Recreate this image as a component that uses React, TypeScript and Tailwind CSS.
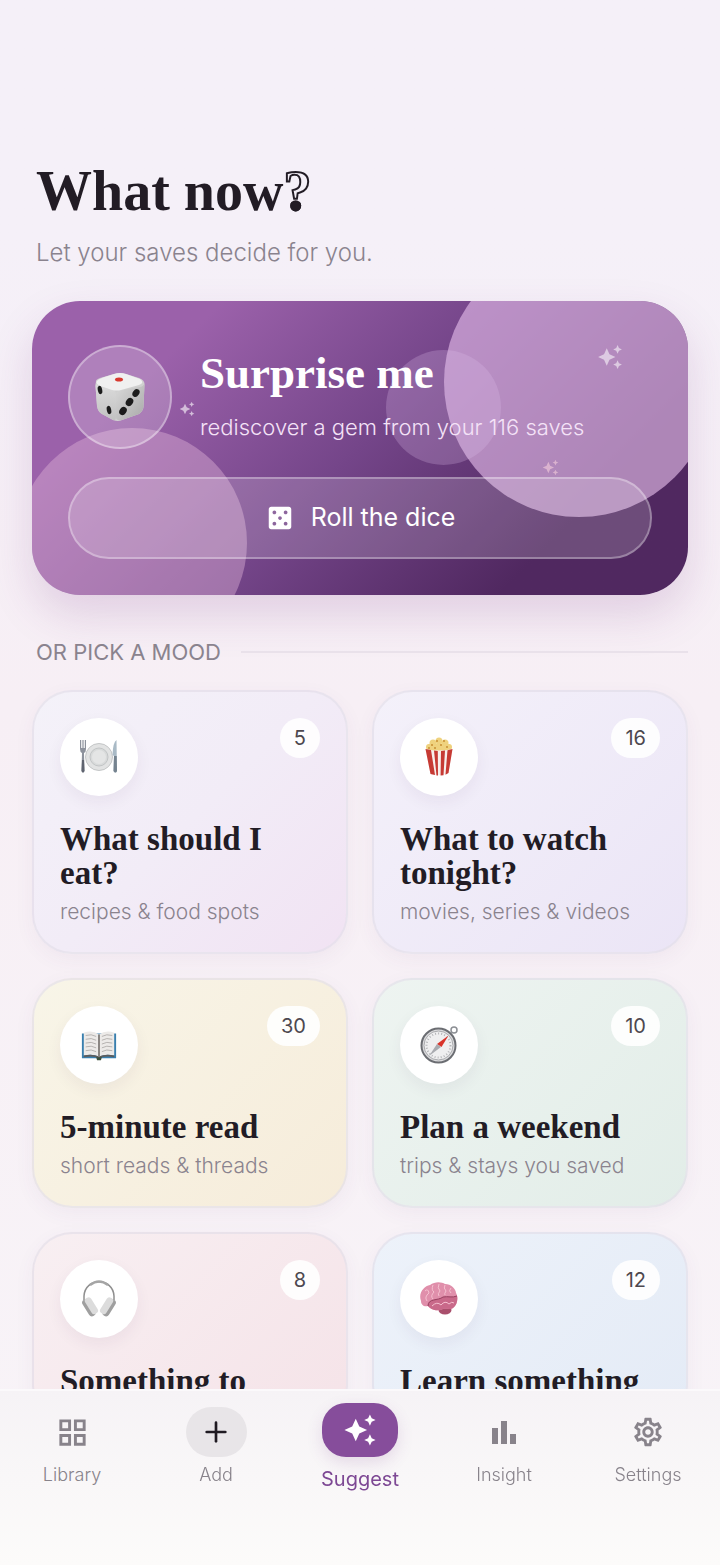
import React from "react"
import { MdAutoAwesome, MdCasino, MdOutlineGridView, MdOutlineSettings } from "react-icons/md"
import { Plus } from "lucide-react"

interface Mood {
    title: string
    note?: string
    count: number
    icon: React.ReactNode
    background: string
}

interface NavItem {
    label: string
    icon: React.ReactNode
    kind: "plain" | "add" | "active"
}

const serif = "font-['Liberation_Serif',serif]"

const DiceIcon = () => (
    <svg width="50" height="50" viewBox="0 0 50 50" aria-hidden="true">
        <defs>
            <linearGradient id="diceLeft" x1="0" y1="0" x2="0" y2="1">
                <stop offset="0" stopColor="#dcdcdc" />
                <stop offset="1" stopColor="#c2c2c2" />
            </linearGradient>
            <linearGradient id="diceRight" x1="0" y1="0" x2="1" y2="1">
                <stop offset="0" stopColor="#dadada" />
                <stop offset="1" stopColor="#a9a9a9" />
            </linearGradient>
        </defs>
        <path d="M1 10 Q0 8 5 6 L19 2 Q25 0 31 2 L44 6 Q50 8 49.500 13 L48.500 35 Q48 39 44 42 L27 48 Q23 50 18 48 L7 42 Q3 40 2 34 L0.500 14 Z" fill="#d0d0d0" />
        <path d="M1 10 Q1 14 6 15 L18 18 Q21 19 21 23 V45 Q21 49 18 48 L7 42 Q3 40 2 34 L0.500 14 Z" fill="url(#diceLeft)" />
        <path d="M49.500 11 Q49 14 45 15 L26 18 Q21 19 21 23 V45 Q21 49 27 48 L44 42 Q48 39 48.500 35 Z" fill="url(#diceRight)" />
        <path d="M3 8 Q5 6 19 2 Q25 0 31 2 L45 7 Q50 11 44 13 L26 18 Q22 19 17 18 L5 14 Q-1 11 3 8 Z" fill="#f0f0f0" />
        <ellipse cx="24" cy="7.500" rx="4" ry="2" fill="#d8392f" />
        <ellipse cx="5" cy="18" rx="2.200" ry="4.200" transform="rotate(-12 5 18)" fill="#1c1c1c" />
        <ellipse cx="14" cy="38" rx="2.200" ry="4.200" transform="rotate(-12 14 38)" fill="#1c1c1c" />
        <ellipse cx="41" cy="21" rx="3.200" ry="4.200" transform="rotate(35 41 21)" fill="#1c1c1c" />
        <ellipse cx="34.500" cy="30" rx="3.400" ry="4.400" transform="rotate(35 34.500 30)" fill="#1c1c1c" />
        <ellipse cx="28" cy="39" rx="3.400" ry="4.400" transform="rotate(35 28 39)" fill="#1c1c1c" />
    </svg>
)

const PlateIcon = () => (
    <svg width="40" height="40" viewBox="0 0 40 40" aria-hidden="true">
        <circle cx="20" cy="20" r="13.500" fill="#e2e3e3" stroke="#c4c6c7" />
        <circle cx="20" cy="20" r="9" fill="#d8dada" stroke="#c2c5c6" />
        <circle cx="20" cy="20" r="7" fill="#e4e5e5" />
        <path d="M1 3 V12 Q1 15 3 16 L2.500 34 Q4 37 5.500 34 L5 16 Q7 15 7 12 V3 H5.800 V11 H4.600 V3 H3.400 V11 H2.200 V3 Z" fill="#8d929c" />
        <path d="M3 23 L2.500 34 Q4 37 5.500 34 L5 23 Z" fill="#5f6470" />
        <path d="M37.500 3 Q34 5 33.500 18 L35 19 L34.500 34 Q36.500 37 38 34 Z" fill="#a9bac6" />
        <path d="M35 19 L34.500 34 Q36.500 37 38 34 L37.700 19 Z" fill="#75838f" />
    </svg>
)

const PopcornIcon = () => (
    <svg width="40" height="40" viewBox="0 0 40 40" aria-hidden="true">
        <g fill="#efd27e">
            <circle cx="10" cy="10" r="3" />
            <circle cx="14" cy="6" r="3.500" />
            <circle cx="20" cy="4" r="3.500" />
            <circle cx="26" cy="6" r="3.500" />
            <circle cx="30" cy="10" r="3" />
            <rect x="8" y="7" width="24" height="8" rx="3" />
        </g>
        <g fill="#c98f35">
            <circle cx="13" cy="8" r="1" />
            <circle cx="18" cy="4" r="1" />
            <circle cx="22" cy="8" r="1" />
            <circle cx="25" cy="4" r="1" />
            <circle cx="28" cy="10" r="1" />
            <circle cx="16" cy="11" r="1" />
            <circle cx="10" cy="11" r="1" />
        </g>
        <path d="M6.500 12 Q20 15 33.500 12 L29.500 36 Q20 40 11.500 37 Z" fill="#f7efed" />
        <path d="M6.500 12 L12 13 L16 38 L11.500 37 Z M15 13.600 L18.800 14 L19 38.600 L17.500 38.400 Z M22 14 L26 13.600 L24.500 38.200 L21.600 38.600 Z M28.500 13.200 L33.500 12 L29.500 36 L26.500 37.700 Z" fill="#c63a34" />
    </svg>
)

const BookIcon = () => (
    <svg width="38" height="38" viewBox="0 0 40 40" aria-hidden="true">
        <path d="M2 8 H38 V34 H2 Z" fill="#397fae" />
        <path d="M4 7 Q13 4 20 9 Q27 4 36 7 V31 Q27 29 20 32 Q13 29 4 31 Z" fill="#eceae8" />
        <path d="M4 31 Q13 29 20 32 Q27 29 36 31 V33 Q26 31 20 34 Q14 31 4 33 Z" fill="#5f5c5a" />
        <path d="M20 9 V33" stroke="#85817d" strokeWidth="2" />
        <path d="M6 10 Q12 8 17 11 M6 14 Q12 12 17 15 M6 18 Q12 16 17 19 M6 22 Q12 20 17 23 M6 26 Q12 24 17 27 M34 10 Q28 8 23 11 M34 14 Q28 12 23 15 M34 18 Q28 16 23 19 M34 22 Q28 20 23 23 M34 26 Q28 24 23 27" stroke="#b3b0ae" fill="none" />
        <path d="M17 33 H23 L22 36 H18 Z" fill="#3c4f3c" />
    </svg>
)

const CompassIcon = () => (
    <svg width="40" height="40" viewBox="0 0 40 40" aria-hidden="true">
        <circle cx="35" cy="5" r="3" fill="none" stroke="#8c8f94" strokeWidth="1.500" />
        <circle cx="19.500" cy="20.500" r="17" fill="#dcdcde" stroke="#6b6d72" strokeWidth="2" />
        <circle cx="19.500" cy="20.500" r="14.500" fill="#efeff0" stroke="#a9aaad" />
        <circle cx="19.500" cy="20.500" r="12" fill="none" stroke="#b4b5b8" strokeWidth="2" strokeDasharray="1 2.100" />
        <path d="M29.500 10.500 L22.500 22 L18 19 Z" fill="#d9342b" />
        <path d="M10 31 L18 19 L22 22 Z" fill="#a9abb0" />
    </svg>
)

const HeadphonesIcon = () => (
    <svg width="40" height="40" viewBox="0 0 40 40" aria-hidden="true">
        <path d="M5 21 V17 C6 -2 34 -2 35 17 V21" fill="none" stroke="#8f8f8f" strokeWidth="1.500" />
        <path d="M11 6 Q20 -1 29 6" fill="none" stroke="#a5a5a5" strokeWidth="2.500" />
        <rect x="6" y="19" width="7" height="19" rx="3.500" transform="rotate(-32 10 28)" fill="#9f9f9f" />
        <rect x="9" y="18" width="7" height="18" rx="3" transform="rotate(-32 12 27)" fill="#dcdcdc" />
        <rect x="27" y="19" width="7" height="19" rx="3.500" transform="rotate(32 30 28)" fill="#9f9f9f" />
        <rect x="24" y="18" width="7" height="18" rx="3" transform="rotate(32 28 27)" fill="#dcdcdc" />
    </svg>
)

const BrainIcon = () => (
    <svg width="40" height="40" viewBox="0 0 40 40" aria-hidden="true">
        <ellipse cx="26" cy="31" rx="6.500" ry="4.500" fill="#a94f6c" />
        <path d="M2 22 C-1 14 5 7 11 6 C16 2 23 3 26 5 C32 5 37 10 37 14 C40 19 38 26 34 29 C31 31 27 29 24 30 C18 33 11 30 9 27 C5 28 2 26 2 22 Z" fill="#e08fab" />
        <path d="M9 27 C9 19 19 22 24 18 C29 17 33 19 38 17 C39 22 37 27 34 29 C31 31 27 29 24 30 C18 33 11 30 9 27 Z" fill="#c9698a" />
        <path d="M6 12 Q9 9 10 14 Q5 18 8 22 M14 6 Q12 11 15 13 Q11 17 14 20 M20 5 Q18 9 21 12 Q18 15 20 17 M26 6 Q24 9 27 12 Q25 15 26 16 M32 9 Q29 12 32 14 M13 27 Q18 22 22 26 Q26 21 30 25 Q33 22 35 24" fill="none" stroke="#f5c0d0" />
        <path d="M9 27 C9 19 19 22 24 18 C29 17 33 19 38 17" fill="none" stroke="#97405f" />
    </svg>
)

const BarsIcon = () => (
    <svg width="30" height="30" viewBox="0 0 30 30" fill="currentColor" aria-hidden="true">
        <rect x="3" y="11" width="6" height="16" />
        <rect x="12" y="4" width="6" height="23" />
        <rect x="21" y="17" width="6" height="10" />
    </svg>
)

const moods: Mood[] = [
    { title: "What should I eat?", note: "recipes & food spots", count: 5, icon: <PlateIcon />, background: "bg-linear-135 from-[#f4f2f9] via-[#f2ecf7] to-[#f1e3f3]" },
    { title: "What to watch tonight?", note: "movies, series & videos", count: 16, icon: <PopcornIcon />, background: "bg-linear-135 from-[#f4f1fa] to-[#ebe5f6]" },
    { title: "5-minute read", note: "short reads & threads", count: 30, icon: <BookIcon />, background: "bg-linear-135 from-[#f8f5e8] to-[#f6ecda]" },
    { title: "Plan a weekend", note: "trips & stays you saved", count: 10, icon: <CompassIcon />, background: "bg-linear-135 from-[#eef4f1] to-[#e2ede8]" },
    { title: "Something to", count: 8, icon: <HeadphonesIcon />, background: "bg-linear-135 from-[#f8eff2] to-[#f5e3e8]" },
    { title: "Learn something", count: 12, icon: <BrainIcon />, background: "bg-linear-135 from-[#edf2fa] to-[#e4ebf6]" },
]

const navItems: NavItem[] = [
    { label: "Library", icon: <MdOutlineGridView size={35} />, kind: "plain" },
    { label: "Add", icon: <Plus size={32} strokeWidth={2} />, kind: "add" },
    { label: "Suggest", icon: <MdAutoAwesome size={34} />, kind: "active" },
    { label: "Insight", icon: <BarsIcon />, kind: "plain" },
    { label: "Settings", icon: <MdOutlineSettings size={34} />, kind: "plain" },
]

const SurpriseCard = () => (
    <section className="relative mt-8 overflow-hidden rounded-[48px] bg-linear-135 from-[#9b61aa] from-20% via-[#744589] via-50% to-[#502860] to-80% p-9">
        <div className="absolute -top-[54px] -right-[26px] size-[270px] rounded-full bg-[#e0b8e6]/65" />
        <div className="absolute top-[49px] left-[54%] size-[115px] rounded-full bg-[#e0c0ec]/25" />
        <div className="absolute -bottom-[63px] -left-[15px] size-[230px] rounded-full bg-[#dcb0d4]/45" />
        <MdAutoAwesome size={26} className="absolute top-[43px] right-[65px] text-white/55" />
        <MdAutoAwesome size={16} className="absolute top-[100px] left-[147px] text-white/60" />
        <MdAutoAwesome size={17} className="absolute top-[158px] right-[129px] text-[#f5cfdc]/60" />
        <div className="relative flex min-h-[120px] items-center gap-7">
            <div className="flex size-[104px] shrink-0 items-center justify-center rounded-full border-2 border-white/35 bg-white/20">
                <DiceIcon />
            </div>
            <div className="flex flex-col gap-3 pb-1">
                <h2 className={`${serif} text-[45px] leading-[52px] font-bold text-white`}>Surprise me</h2>
                <p className="text-[22px] leading-8 font-light text-[#f4e2f7]">rediscover a gem from your 116 saves</p>
            </div>
        </div>
        <button className="relative mt-5 flex h-[82px] w-full items-center justify-center gap-4 rounded-full border-2 border-white/30 bg-white/17 text-[25px] font-normal text-white">
            <MdCasino size={30} />
            Roll the dice
        </button>
    </section>
)

const MoodCard: React.FunctionComponent<{ mood: Mood }> = ({ mood }) => (
    <a href="#" className={`block rounded-[40px] border-2 border-[#e4dfe9]/70 p-[26px] shadow-[0_6px_20px_rgba(90,60,110,0.05)] ${mood.background}`}>
        <div className="flex items-start justify-between">
            <span className="flex size-[78px] items-center justify-center rounded-full bg-white shadow-[0_6px_16px_rgba(60,40,80,0.06)]">{mood.icon}</span>
            <span className="flex h-10 min-w-10 items-center justify-center rounded-full bg-white/90 px-[14px] text-xl text-[#4d484f]">{mood.count}</span>
        </div>
        <h3 className={`${serif} mt-[26px] text-[33px] leading-[34px] font-bold text-[#221c25]`}>{mood.title}</h3>
        {mood.note && <p className="mt-2 text-[21px] leading-7 font-light whitespace-nowrap text-[#8a838e]">{mood.note}</p>}
    </a>
)

const NavButton: React.FunctionComponent<{ item: NavItem }> = ({ item }) => {
    if (item.kind === "active") {
        return (
            <button aria-current="page" className="flex flex-1 flex-col items-center gap-2 pt-3 text-xl leading-7 font-normal text-[#7d4894]">
                <span className="flex h-[54px] w-[76px] items-center justify-center rounded-3xl bg-[#864d9b] text-white shadow-[0_6px_16px_rgba(120,60,140,0.15)]">{item.icon}</span>
                {item.label}
            </button>
        )
    }
    return (
        <button className="flex flex-1 flex-col items-center gap-[6px] pt-4 text-lg leading-6 font-light text-[#88838b]">
            <span className={`flex h-[50px] w-[61px] items-center justify-center rounded-full ${item.kind === "add" ? "bg-[#e8e5e8] text-[#1f1a22]" : ""}`}>{item.icon}</span>
            {item.label}
        </button>
    )
}

export default function App() {
    return (
        <div className="min-h-screen bg-linear-to-b from-[#f5f0f8] from-15% via-[#f7eff5] via-45% to-[#f8f4f8] font-['Inter',sans-serif]">
            <main className="px-8 pt-[159px] pb-32">
                <header className="px-1">
                    <h1 className={`${serif} text-[56px] leading-16 font-bold text-[#221c25]`}>
                        What now
                        <span className="bg-linear-to-b from-[#f5f0f8] from-68% to-[#221c25] to-68% bg-clip-text text-transparent [-webkit-text-stroke:2px_#221c25]">?</span>
                    </h1>
                    <p className="mt-[14px] text-2xl leading-8 font-light text-[#8a838e]">Let your saves decide for you.</p>
                </header>
                <div className="rounded-[48px] shadow-[0_20px_44px_rgba(120,50,130,0.17)]">
                    <SurpriseCard />
                </div>
                <div className="mt-[43px] flex items-center gap-5 pl-1">
                    <h2 className="text-[22px] leading-7 font-normal text-[#8a838e]">OR PICK A MOOD</h2>
                    <div className="h-[2px] flex-1 bg-[#e9e1ea]" />
                </div>
                <div className="mt-6 grid grid-cols-2 gap-6">
                    {moods.map((mood) => (
                        <MoodCard key={mood.title} mood={mood} />
                    ))}
                </div>
            </main>
            <nav className="fixed inset-x-0 bottom-0 flex h-44 items-start border-t-2 border-[#fbf9fb] bg-linear-to-b from-[#f6f3f6] to-[#fcfbfa]">
                {navItems.map((item) => (
                    <NavButton key={item.label} item={item} />
                ))}
            </nav>
        </div>
    )
}
